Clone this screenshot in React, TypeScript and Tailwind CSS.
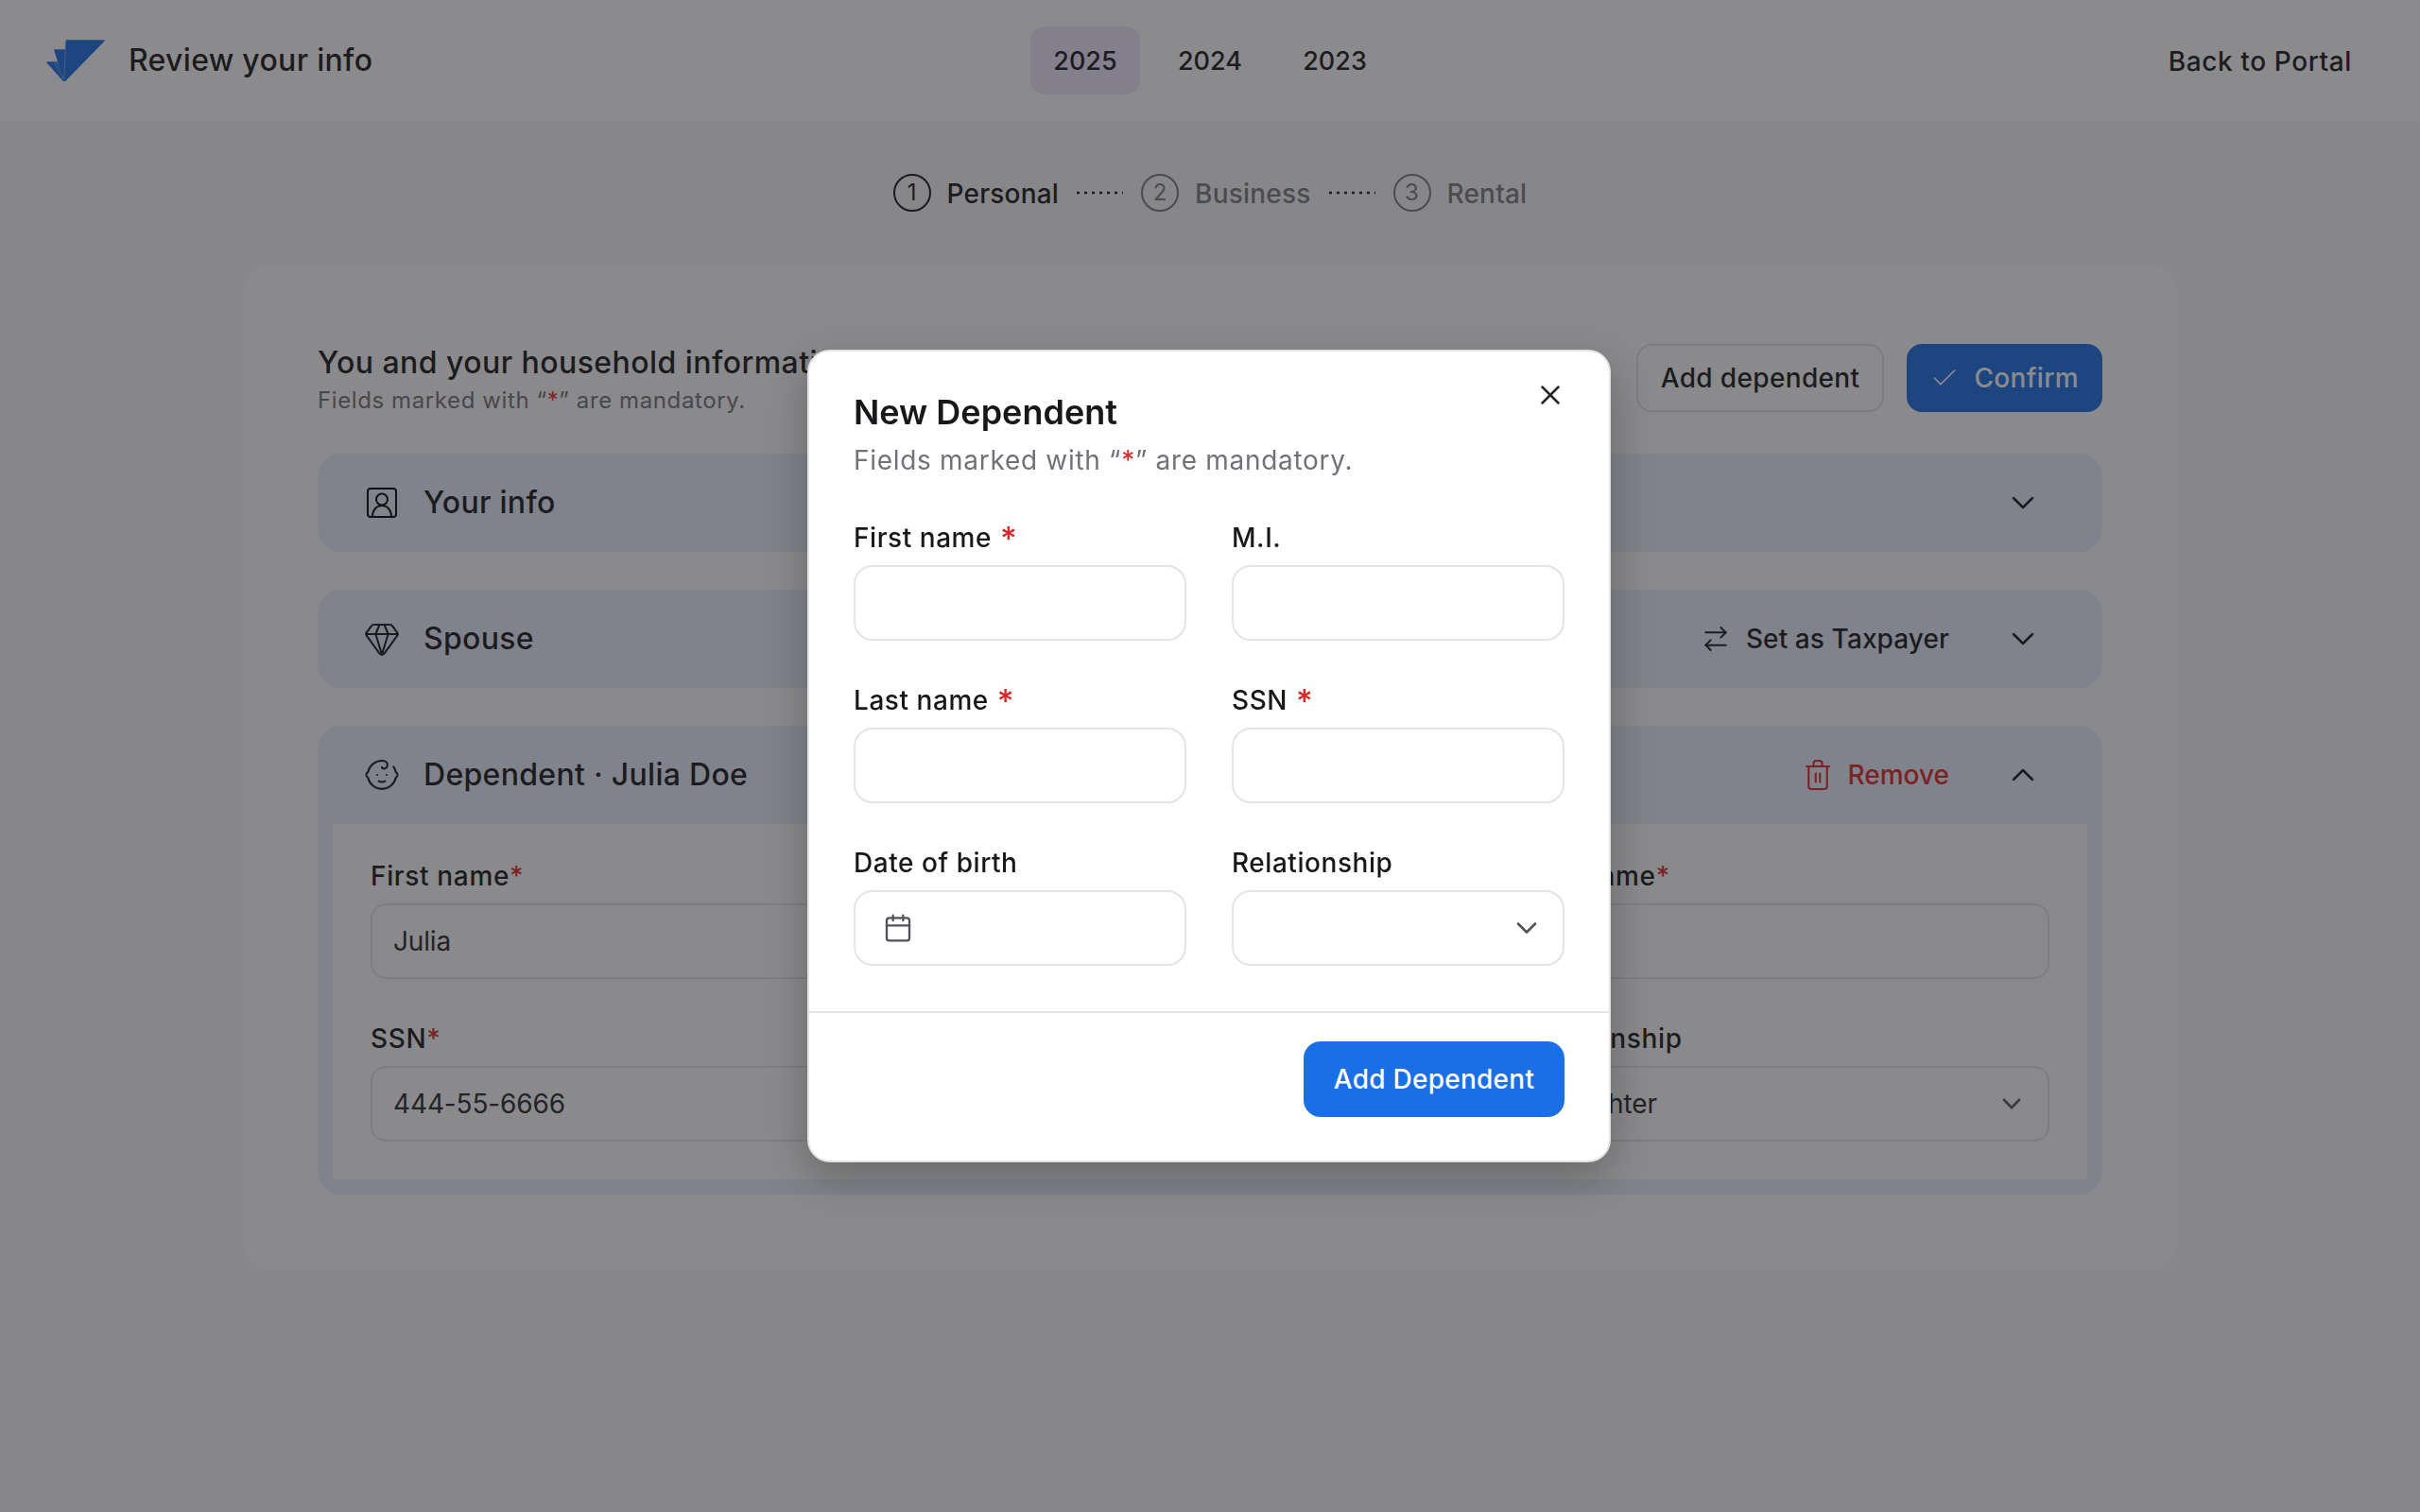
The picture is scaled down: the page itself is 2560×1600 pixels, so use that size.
import React from 'react';
import { ArrowRightLeft, Baby, Calendar, Check, ChevronDown, ChevronUp, Gem, X } from 'lucide-react';

const Logo = () => (
  <svg width="62" height="44" viewBox="0 0 62 44" className="shrink-0">
    <path d="M1 24 H11 L19 44 Z" fill="#1a6fe6" stroke="#1a6fe6" strokeWidth="1.5" strokeLinejoin="round" />
    <path d="M9 11 H21 L19 44 Z" fill="#1a6fe6" stroke="#1a6fe6" strokeWidth="1.5" strokeLinejoin="round" />
    <path d="M21.5 1 H61 L19 44 Z" fill="#1a6fe6" stroke="#1a6fe6" strokeWidth="1.5" strokeLinejoin="round" />
    <path d="M9 24 L18.5 42 M20.5 2 L18.8 42" stroke="#6f9fe8" strokeWidth="1" fill="none" />
  </svg>
);

const PortraitIcon = () => (
  <svg viewBox="0 0 32 32" className="size-8" fill="none" stroke="currentColor" strokeWidth="2">
    <rect x="1" y="1" width="30" height="30" rx="3" />
    <circle cx="16" cy="12.5" r="6" />
    <path d="M6 31c0-7 4-12 10-12s10 5 10 12" />
  </svg>
);

const TrashIcon = () => (
  <svg viewBox="0 0 24 24" className="size-9" fill="none" stroke="currentColor" strokeWidth="1.4" strokeLinecap="round">
    <path d="M4 6h16" />
    <path d="M9 6V4a2 2 0 0 1 2-2h2a2 2 0 0 1 2 2v2" />
    <path d="M5.5 6v14a2 2 0 0 0 2 2h9a2 2 0 0 0 2-2V6" />
    <path d="M10.5 11v6M13.5 11v6" />
  </svg>
);

const Dots = () => (
  <svg width="49" height="4" className="shrink-0">
    <line x1="0" y1="2" x2="49" y2="2" stroke="#18181b" strokeWidth="2.5" strokeDasharray="3 5" />
  </svg>
);

const Step = ({ n, label, active }: { n: number; label: string; active?: boolean }) => (
  <div className={`flex items-center gap-[17px] ${active ? 'text-[#18181b]' : 'text-[#7a7a80]'}`}>
    <span className={`flex size-10 items-center justify-center rounded-full border-2 text-[24px] ${active ? 'border-[#18181b]' : 'border-[#7a7a80]'}`}>{n}</span>
    <span className="mt-[1px] text-[28px] font-medium leading-8 tracking-[0.2px]">{label}</span>
  </div>
);

const Row = ({ icon, title, right }: { icon: React.ReactNode; title: string; right: React.ReactNode }) => (
  <div className="flex h-[104px] items-center pl-[48px] pr-[64px]">
    <span className="flex size-10 items-center justify-center">{icon}</span>
    <span className="ml-6 text-[32px] font-medium tracking-[0.3px] text-[#18181b]">{title}</span>
    <div className="ml-auto flex items-center gap-[58px]">{right}</div>
  </div>
);

const BgField = ({ label, value, select, required }: { label?: string; value?: string; select?: boolean; required?: boolean }) => (
  <div>
    <div className="mb-3 h-8 text-[28px] font-medium leading-[30px] tracking-[0.65px] text-[#18181b]">
      {label}
      {required && <span className="text-[#dc2626]">*</span>}
    </div>
    <div className="flex h-20 items-center justify-between rounded-[16px] border-2 border-[#e4e4e7] pl-[22px] pr-[22px] text-[28px] tracking-[-0.15px] text-[#27272a]">
      {value}
      {select && <ChevronDown className="size-8 text-[#52525b]" strokeWidth={2} />}
    </div>
  </div>
);

const Field = ({ label, required, children }: { label: string; required?: boolean; children?: React.ReactNode }) => (
  <div>
    <div className="mb-[14px] flex h-8 items-center pt-[2px] text-[28px] font-medium leading-8 tracking-[0.55px] text-[#18181b]">
      {label}
      {required && <span className="ml-[9px] mt-[2px] text-[34px] leading-none text-[#dc2626]">*</span>}
    </div>
    <div className="flex h-20 items-center justify-between rounded-[20px] border-2 border-[#e4e4e7]">{children}</div>
  </div>
);

const App: React.FC = () => {
  return (
    <div className="relative min-h-[1600px] bg-[#f6f6f8] font-['Inter',sans-serif]">
      <header className="grid h-[128px] grid-cols-3 items-center bg-white pl-[49px] pr-[72px]">
        <div className="flex items-center gap-[25px]">
          <Logo />
          <span className="text-[32px] font-medium tracking-[0.3px] text-[#18181b]">Review your info</span>
        </div>
        <nav className="flex justify-center gap-4 pl-[23px] text-[27px] font-medium text-[#18181b]">
          <span className="flex h-[72px] w-[116px] items-center justify-center rounded-[16px] bg-[#efe6ff] pt-[2px]">2025</span>
          <span className="flex h-[72px] w-[116px] items-center justify-center pt-[2px]">2024</span>
          <span className="flex h-[72px] w-[116px] items-center justify-center pt-[2px]">2023</span>
        </nav>
        <div className="pt-[1px] text-right text-[28px] font-medium tracking-[0.6px] text-[#18181b]">Back to Portal</div>
      </header>

      <div className="flex items-center justify-center gap-[19px] pb-[56px] pt-[56px]">
        <Step n={1} label="Personal" active />
        <Dots />
        <Step n={2} label="Business" />
        <Dots />
        <Step n={3} label="Rental" />
      </div>

      <main className="mx-auto w-[2048px] rounded-[32px] bg-[#fcfcfc] p-[80px]">
        <div className="mb-10 flex h-20 items-center justify-between">
          <div className="pt-[3px]">
            <h1 className="text-[32px] font-medium leading-[44px] tracking-[0.45px] text-[#18181b]">You and your household information</h1>
            <p className="text-[24px] leading-9 tracking-[0.6px] text-[#71717a]">
              Fields marked with “<span className="text-[#dc2626]">*</span>” are mandatory.
            </p>
          </div>
          <div className="flex items-center gap-6">
            <button className="flex h-[72px] items-center rounded-[16px] border-2 border-[#e4e4e7] px-6 text-[28px] font-medium tracking-[0.35px] text-[#18181b]">Add dependent</button>
            <button className="flex h-[72px] items-center gap-[15px] rounded-[16px] bg-[#1a6fe6] pl-6 pr-[25px] text-[28px] font-medium tracking-[0.35px] text-white">
              <Check className="size-8" strokeWidth={1.25} />
              Confirm
            </button>
          </div>
        </div>

        <div className="flex flex-col gap-10">
          <section className="rounded-[24px] bg-[#e9eefb]">
            <Row icon={<PortraitIcon />} title="Your info" right={<ChevronDown className="size-10 text-[#18181b]" strokeWidth={1.5} />} />
          </section>
          <section className="rounded-[24px] bg-[#e9eefb]">
            <Row
              icon={<Gem className="size-10 text-[#18181b]" strokeWidth={1.25} />}
              title="Spouse"
              right={
                <>
                  <span className="flex items-center gap-4 text-[28px] font-medium tracking-[0.1px] text-[#18181b]">
                    <ArrowRightLeft className="size-8" strokeWidth={1.5} />
                    Set as Taxpayer
                  </span>
                  <ChevronDown className="size-10 text-[#18181b]" strokeWidth={1.5} />
                </>
              }
            />
          </section>
          <section className="rounded-[24px] bg-[#e9eefb]">
            <Row
              icon={<Baby className="size-10 text-[#18181b]" strokeWidth={1.25} />}
              title="Dependent · Julia Doe"
              right={
                <>
                  <span className="flex items-center gap-[14px] text-[28px] font-medium text-[#dc2626]">
                    <TrashIcon />
                    Remove
                  </span>
                  <ChevronUp className="size-10 text-[#18181b]" strokeWidth={1.5} />
                </>
              }
            />
            <div className="mx-4 mb-4 grid grid-cols-3 gap-x-12 gap-y-12 bg-[#fcfcfc] p-10">
              <BgField label="First name" value="Julia" required />
              <BgField />
              <BgField label="Last name" required />
              <BgField label="SSN" value="444-55-6666" required />
              <BgField />
              <BgField label="Relationship" value="Daughter" select />
            </div>
          </section>
        </div>
      </main>

      <div className="fixed inset-0 flex items-center justify-center bg-[#212124]/52 pr-[2px]">
        <div className="relative w-[850px] rounded-[24px] border-2 border-[#e4e4e7] bg-white shadow-[0_16px_48px_rgba(0,0,0,0.25)]">
          <button className="absolute right-[45px] top-[29px] text-[#27272a]">
            <X className="size-[34px]" strokeWidth={1.75} />
          </button>
          <div className="px-[47px] pb-12 pt-[42px]">
            <h2 className="text-[36px] font-semibold leading-[44px] text-[#18181b]">New Dependent</h2>
            <p className="mb-[47px] mt-[11px] text-[28px] leading-9 tracking-[0.7px] text-[#71717a]">
              Fields marked with “<span className="text-[#dc2626]">*</span>” are mandatory.
            </p>
            <div className="grid grid-cols-2 gap-x-12 gap-y-[46px]">
              <Field label="First name" required />
              <Field label="M.I." />
              <Field label="Last name" required />
              <Field label="SSN" required />
              <Field label="Date of birth">
                <Calendar className="ml-[29px] size-8 text-[#52525b]" strokeWidth={1.75} />
              </Field>
              <Field label="Relationship">
                <ChevronDown className="ml-auto mr-[20px] size-9 text-[#52525b]" strokeWidth={1.75} />
              </Field>
            </div>
          </div>
          <div className="flex justify-end border-t-2 border-[#e4e4e7] px-[47px] pb-[46px] pt-[30px]">
            <button className="flex h-20 w-[276px] items-center justify-center rounded-[18px] bg-[#1a6fe6] text-[28px] font-medium tracking-[0.25px] text-white">Add Dependent</button>
          </div>
        </div>
      </div>
    </div>
  );
};

export default App;
